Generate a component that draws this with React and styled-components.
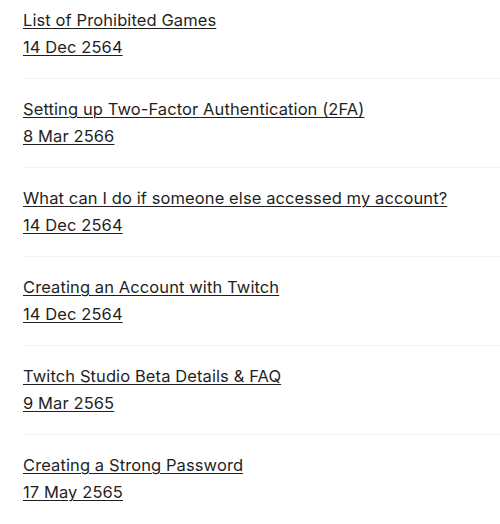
import styled, { createGlobalStyle } from "styled-components";

const GlobalStyle = createGlobalStyle`
  body {
    margin: 0;
    background: #ffffff;
    font-family: Inter, "Noto Sans", sans-serif;
  }
`;

const List = styled.ul`
  list-style: none;
  margin: 0;
  padding: 0 0 0 23px;
`;

const Item = styled.li`
  padding: 17px 0 17px;
  border-bottom: 1px solid #f2f2f3;

  &:first-child {
    padding-top: 7px;
  }

  &:last-child {
    border-bottom: none;
  }
`;

const Link = styled.a`
  display: block;
  width: fit-content;
  font-size: 16.5px;
  line-height: 27px;
  color: #1f1f23;
  text-decoration: underline;
  text-decoration-thickness: 1px;
  text-underline-offset: 2px;
  letter-spacing: 0.1px;
`;

const articles = [
  { title: "List of Prohibited Games", date: "14 Dec 2564" },
  { title: "Setting up Two-Factor Authentication (2FA)", date: "8 Mar 2566" },
  { title: "What can I do if someone else accessed my account?", date: "14 Dec 2564" },
  { title: "Creating an Account with Twitch", date: "14 Dec 2564" },
  { title: "Twitch Studio Beta Details & FAQ", date: "9 Mar 2565" },
  { title: "Creating a Strong Password", date: "17 May 2565" },
];

export default function App() {
  return (
    <>
      <GlobalStyle />
      <List>
        {articles.map((a) => (
          <Item key={a.title}>
            <Link href="#">{a.title}</Link>
            <Link href="#">{a.date}</Link>
          </Item>
        ))}
      </List>
    </>
  );
}
